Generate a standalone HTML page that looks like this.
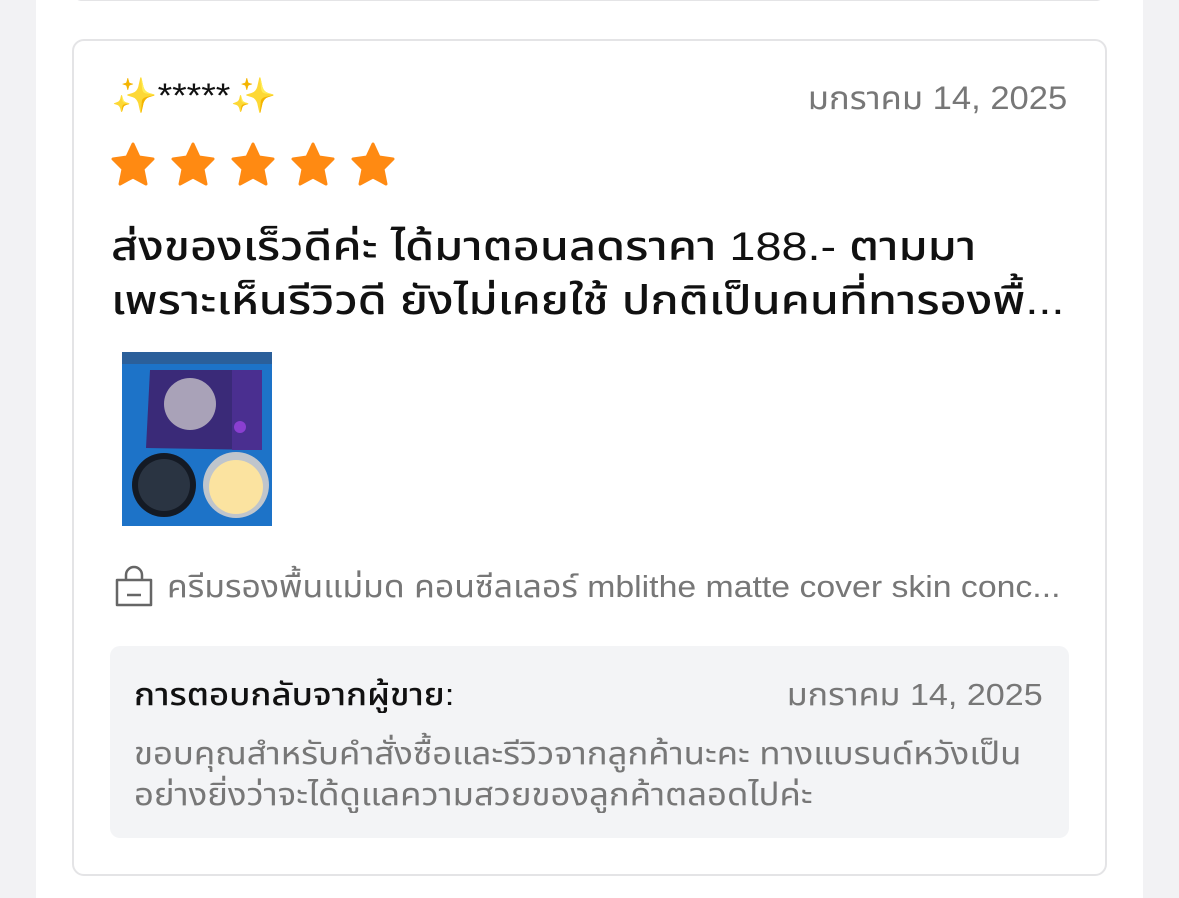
<!DOCTYPE html>
<html><head><meta charset="utf-8"><style>
*{margin:0;padding:0;box-sizing:border-box}
body{width:1179px;height:898px;overflow:hidden;background:#f2f2f4;font-family:"Liberation Sans","Noto Sans Thai","Tlwg Typo",sans-serif;position:relative}
.main{position:absolute;left:36px;top:0;width:1107px;height:898px;background:#fff}
.topcard{position:absolute;left:72px;top:-20px;width:1034px;height:21px;border:2px solid #e4e4e6;border-top:none;border-radius:0 0 10px 10px}
.card{position:absolute;left:72px;top:39px;width:1035px;height:837px;border:2px solid #e4e4e6;border-radius:12px}
.abs{position:absolute;white-space:nowrap}
.l{transform-origin:left center}
.r{transform-origin:right center}
</style></head><body>
<div class="main"></div>
<div class="topcard"></div>
<div class="card"></div>
<div class="abs l" style="left:111px;top:76px;font-size:34px;color:#111;transform:scaleX(1.1)">✨*****✨</div>
<div class="abs r" style="right:112px;top:76px;font-size:32px;color:#777;transform:scaleX(1.08)">มกราคม 14, 2025</div>
<svg class="abs" style="left:109px;top:140px" width="292" height="52" viewBox="0 0 292 52">
<defs><path id="s" d="M24 4 L30 17 L44 19 L34 29 L37 44 L24 37 L11 44 L14 29 L4 19 L18 17 Z" fill="#ff8a12" stroke="#ff8a12" stroke-width="3" stroke-linejoin="round"/></defs>
<use href="#s" x="0"/><use href="#s" x="60"/><use href="#s" x="120"/><use href="#s" x="180"/><use href="#s" x="240"/>
</svg>
<div class="abs l" style="left:111px;top:220px;font-size:40px;line-height:54px;color:#111;font-weight:500;transform:scaleX(1.17)">ส่งของเร็วดีค่ะ ได้มาตอนลดราคา 188.- ตามมา<br>เพราะเห็นรีวิวดี ยังไม่เคยใช้ ปกติเป็นคนที่ทารองพื้...</div>
<svg class="abs" style="left:122px;top:352px" width="150" height="174" viewBox="0 0 150 174">
<rect width="150" height="174" fill="#1d73c8"/>
<rect x="0" y="0" width="150" height="12" fill="#2b5f9a"/>
<polygon points="28,18 140,18 138,98 24,96" fill="#3a2a78"/>
<rect x="110" y="18" width="30" height="80" fill="#4a2f90"/>
<circle cx="68" cy="52" r="26" fill="#a9a2b8"/>
<circle cx="118" cy="75" r="6" fill="#8a3fd0"/>
<circle cx="42" cy="133" r="32" fill="#141a24"/>
<circle cx="42" cy="133" r="26" fill="#2a3442"/>
<circle cx="114" cy="133" r="33" fill="#bfc5cc"/>
<circle cx="114" cy="135" r="27" fill="#fbe3a0"/>
</svg>
<svg class="abs" style="left:113px;top:565px" width="42" height="44" viewBox="0 0 42 44" fill="none" stroke="#666" stroke-width="2.5">
<path d="M13 15 V10 a8 8 0 0 1 16 0 V15"/><path d="M4 15 H38 V40 H4 Z" stroke-linejoin="round"/><path d="M14 30 H28"/>
</svg>
<div class="abs l" style="left:167px;top:564px;font-size:31px;color:#777;transform:scaleX(1.09)">ครีมรองพื้นแม่มด คอนซีลเลอร์ mblithe matte cover skin conc...</div>
<div class="abs" style="left:110px;top:646px;width:959px;height:192px;background:#f3f4f6;border-radius:10px"></div>
<div class="abs l" style="left:134px;top:672px;font-size:31px;color:#111;font-weight:500;transform:scaleX(1.12)">การตอบกลับจากผู้ขาย:</div>
<div class="abs r" style="right:136px;top:672px;font-size:31px;color:#777;transform:scaleX(1.1)">มกราคม 14, 2025</div>
<div class="abs l" style="left:134px;top:733px;font-size:31px;line-height:41px;color:#777;transform:scaleX(1.12)">ขอบคุณสำหรับคำสั่งซื้อและรีวิวจากลูกค้านะคะ ทางแบรนด์หวังเป็น<br>อย่างยิ่งว่าจะได้ดูแลความสวยของลูกค้าตลอดไปค่ะ</div>
</body></html>
